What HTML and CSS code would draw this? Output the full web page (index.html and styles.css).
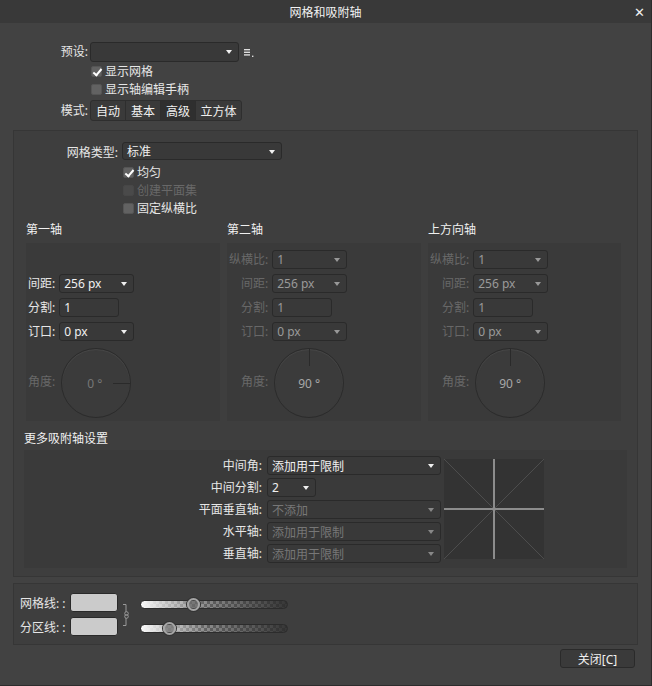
FILE: index.html
```html
<!DOCTYPE html>
<html lang="zh-CN">
<head>
    <meta charset="UTF-8">
    <title>网格和吸附轴</title>
    <link rel="stylesheet" href="styles.css">
</head>
<body>
<div class="dialog">
    <div class="titlebar">
        <span class="title">网格和吸附轴</span>
        <span class="close">&#x2715;</span>
    </div>

    <div class="top">
        <div class="lbl">预设:</div>
        <div class="row">
            <div class="select preset"><span></span><i class="arrow"></i></div>
            <svg class="menu-icon" width="10" height="10" viewBox="0 0 10 10">
                <rect x="0" y="1" width="6" height="1.4" fill="#ddd"/>
                <rect x="0" y="3.6" width="6" height="1.4" fill="#ddd"/>
                <rect x="0" y="6.2" width="6" height="1.4" fill="#ddd"/>
                <rect x="8" y="7.6" width="1.4" height="1.4" fill="#ddd"/>
            </svg>
        </div>
        <div></div>
        <label class="check"><span class="box on"></span>显示网格</label>
        <div></div>
        <label class="check"><span class="box"></span>显示轴编辑手柄</label>
        <div class="lbl">模式:</div>
        <div class="segmented">
            <span>自动</span><span>基本</span><span class="sel">高级</span><span>立方体</span>
        </div>
    </div>

    <div class="panel main">
        <div class="gridtype">
            <div class="lbl">网格类型:</div>
            <div class="select wide"><span>标准</span><i class="arrow"></i></div>
            <div></div>
            <label class="check"><span class="box on"></span>均匀</label>
            <div></div>
            <label class="check disabled"><span class="box"></span>创建平面集</label>
            <div></div>
            <label class="check"><span class="box"></span>固定纵横比</label>
        </div>

        <div class="axes">
            <div class="axis">
                <h3>第一轴</h3>
                <div class="axis-box">
                    <div class="spacer"></div>
                    <div class="lbl">间距:</div>
                    <div class="select w74"><span>256 px</span><i class="arrow"></i></div>
                    <div class="lbl">分割:</div>
                    <div class="input w60">1</div>
                    <div class="lbl">订口:</div>
                    <div class="select w74"><span>0 px</span><i class="arrow"></i></div>
                    <div class="lbl off">角度:</div>
                    <div class="dial deg0"><span>0 °</span></div>
                </div>
            </div>
            <div class="axis">
                <h3>第二轴</h3>
                <div class="axis-box dim">
                    <div class="lbl off">纵横比:</div>
                    <div class="select w74"><span>1</span><i class="arrow"></i></div>
                    <div class="lbl off">间距:</div>
                    <div class="select w74"><span>256 px</span><i class="arrow"></i></div>
                    <div class="lbl off">分割:</div>
                    <div class="input w60">1</div>
                    <div class="lbl off">订口:</div>
                    <div class="select w74"><span>0 px</span><i class="arrow"></i></div>
                    <div class="lbl off">角度:</div>
                    <div class="dial deg90"><span>90 °</span></div>
                </div>
            </div>
            <div class="axis">
                <h3>上方向轴</h3>
                <div class="axis-box dim">
                    <div class="lbl off">纵横比:</div>
                    <div class="select w74"><span>1</span><i class="arrow"></i></div>
                    <div class="lbl off">间距:</div>
                    <div class="select w74"><span>256 px</span><i class="arrow"></i></div>
                    <div class="lbl off">分割:</div>
                    <div class="input w60">1</div>
                    <div class="lbl off">订口:</div>
                    <div class="select w74"><span>0 px</span><i class="arrow"></i></div>
                    <div class="lbl off">角度:</div>
                    <div class="dial deg90"><span>90 °</span></div>
                </div>
            </div>
        </div>

        <h3 class="more-title">更多吸附轴设置</h3>
        <div class="more-box">
            <div class="lbl">中间角:</div>
            <div class="select w173"><span>添加用于限制</span><i class="arrow"></i></div>
            <div class="preview">
                <svg width="100" height="100" viewBox="0 0 100 100">
                    <rect width="100" height="100" fill="#333"/>
                    <line x1="0" y1="0" x2="100" y2="100" stroke="#4d4d4d" stroke-width="1"/>
                    <line x1="100" y1="0" x2="0" y2="100" stroke="#4d4d4d" stroke-width="1"/>
                    <line x1="50" y1="0" x2="50" y2="100" stroke="#8c8c8c" stroke-width="2"/>
                    <line x1="0" y1="50" x2="100" y2="50" stroke="#8c8c8c" stroke-width="2"/>
                </svg>
            </div>
            <div class="lbl">中间分割:</div>
            <div class="select w48"><span>2</span><i class="arrow"></i></div>
            <div class="lbl">平面垂直轴:</div>
            <div class="select w173 dim"><span>不添加</span><i class="arrow"></i></div>
            <div class="lbl">水平轴:</div>
            <div class="select w173 dim"><span>添加用于限制</span><i class="arrow"></i></div>
            <div class="lbl">垂直轴:</div>
            <div class="select w173 dim"><span>添加用于限制</span><i class="arrow"></i></div>
        </div>
    </div>

    <div class="panel lines">
        <div class="swatches">
            <div class="swatch-row">
                <span class="lbl-left">网格线: :</span>
                <span class="swatch"></span>
            </div>
            <div class="swatch-row">
                <span class="lbl-left">分区线: :</span>
                <span class="swatch"></span>
            </div>
            <svg class="link" width="8" height="24" viewBox="0 0 8 24">
                <path d="M1 1.5 H4 V9 M4 15 V22.5 H1" fill="none" stroke="#999" stroke-width="1"/>
                <circle cx="4.5" cy="10.5" r="1.8" fill="none" stroke="#999" stroke-width="1"/>
                <circle cx="4.5" cy="13.5" r="1.8" fill="none" stroke="#999" stroke-width="1"/>
            </svg>
        </div>
        <div class="sliders">
            <div class="slider"><span class="knob" style="left: 46px"></span></div>
            <div class="slider"><span class="knob" style="left: 22px"></span></div>
        </div>
    </div>

    <div class="footer">
        <button class="btn">关闭[C]</button>
    </div>
</div>
</body>
</html>
```

FILE: styles.css
```css
* {
    box-sizing: border-box;
}

body {
    margin: 0;
    background: #2b2b2b;
    font-family: "Noto Sans", "Noto Sans CJK SC", sans-serif;
    font-size: 12px;
    color: #e6e6e6;
}

.dialog {
    width: 652px;
    height: 686px;
    background: #424242;
    border-right: 1px solid #2c2c2c;
    border-bottom: 1px solid #2c2c2c;
}

.titlebar {
    height: 23px;
    background: #393939;
    position: relative;
    display: flex;
    align-items: center;
    justify-content: center;
}

.title {
    color: #f2f2f2;
}

.close {
    position: absolute;
    right: 6px;
    top: 3px;
    font-size: 13px;
    color: #f0f0f0;
}

.lbl {
    justify-self: end;
    align-self: center;
    white-space: nowrap;
    line-height: 16px;
}

.lbl.off,
.check.disabled {
    color: #686868;
}

/* top area */
.top {
    display: grid;
    grid-template-columns: 88px auto;
    column-gap: 2px;
    justify-content: start;
    margin-top: 18px;
}

.row {
    display: flex;
    align-items: center;
    height: 21px;
}

.menu-icon {
    margin-left: 5px;
    margin-top: 2px;
}

.check {
    display: flex;
    align-items: center;
    height: 18px;
    gap: 3px;
    white-space: nowrap;
}

.top .check {
    margin-left: 1px;
}

.box {
    width: 11px;
    height: 11px;
    border-radius: 2px;
    background: #626262;
    border: 1px solid #555;
    position: relative;
}

.box.on::after {
    content: "";
    position: absolute;
    left: 3px;
    top: 0;
    width: 3px;
    height: 7px;
    border-right: 2px solid #fff;
    border-bottom: 2px solid #fff;
    transform: rotate(40deg);
}

.check.disabled .box {
    background: #4a4a4a;
    border-color: #474747;
}

.top .check:nth-of-type(2) {
    margin-bottom: 2px;
}

.segmented {
    display: flex;
    height: 21px;
    width: 152px;
    border: 1px solid #2e2e2e;
    border-radius: 3px;
    background: #3a3a3a;
    overflow: hidden;
}

.segmented span {
    display: flex;
    align-items: center;
    justify-content: center;
    width: 35px;
    border-right: 1px solid #2e2e2e;
    color: #f0f0f0;
}

.segmented span:last-child {
    flex: 1;
    border-right: 0;
}

.segmented .sel {
    background: #2f2f2f;
}

/* fields */
.select,
.input {
    height: 19px;
    border: 1px solid #2a2a2a;
    border-radius: 3px;
    background: #393939;
    display: flex;
    align-items: center;
    padding-left: 4px;
    position: relative;
    color: #f0f0f0;
    white-space: nowrap;
}

.select.preset {
    width: 149px;
    height: 20px;
}

.arrow {
    position: absolute;
    right: 6px;
    top: 7px;
    width: 0;
    height: 0;
    border-left: 3.5px solid transparent;
    border-right: 3.5px solid transparent;
    border-top: 4px solid #f0f0f0;
}

.dim .select,
.dim .input,
.select.dim {
    color: #9a9a9a;
}

.dim .arrow,
.select.dim .arrow {
    border-top-color: #999;
}

.more-box .select.dim {
    color: #777;
}

.more-box .select.dim .arrow {
    border-top-color: #888;
}

.w74 {
    width: 75px;
}

.w60 {
    width: 60px;
}

.w48 {
    width: 49px;
}

.w173 {
    width: 174px;
}

.wide {
    width: 160px;
    height: 18px;
}

/* main panel */
.panel {
    margin: 0 13px;
    background: #3e3e3e;
    border: 1px solid #363636;
}

.main {
    margin-top: 9px;
    padding: 11px 0 8px 12px;
    height: 447px;
}

.gridtype {
    display: grid;
    grid-template-columns: 92px auto;
    column-gap: 4px;
    justify-content: start;
}

.gridtype .check {
    margin-left: 1px;
}

.gridtype .wide {
    margin-bottom: 3px;
}

.axes {
    display: grid;
    grid-template-columns: 194px 194px 193px;
    column-gap: 7px;
    margin-top: 3px;
}

h3 {
    margin: 0;
    font-size: 12px;
    font-weight: normal;
    color: #f0f0f0;
    height: 23px;
    line-height: 20px;
}

.axis-box {
    height: 178px;
    background: #3a3a3a;
    display: grid;
    grid-template-columns: auto auto;
    justify-content: start;
    column-gap: 4px;
    row-gap: 5px;
    padding: 7px 0 0 2px;
    align-content: start;
}

.spacer {
    grid-column: 1 / 3;
    height: 19px;
}

.dial {
    width: 70px;
    height: 70px;
    border-radius: 50%;
    border: 1px solid #2b2b2b;
    background: #3b3b3b;
    box-shadow: inset 0 1px 1px #484848;
    margin: 2px 0 0 2px;
    position: relative;
    display: flex;
    align-items: center;
    justify-content: center;
    color: #a8a8a8;
}

.deg0 span {
    color: #777;
    margin-left: -3px;
}

.deg0::after {
    content: "";
    position: absolute;
    right: 0;
    top: 34px;
    width: 17px;
    height: 1px;
    background: #2a2a2a;
}

.deg90::after {
    content: "";
    position: absolute;
    left: 34px;
    top: 0;
    width: 1px;
    height: 17px;
    background: #2a2a2a;
}

.more-title {
    margin-top: 8px;
    margin-left: -2px;
    height: 21px;
}

.more-box {
    margin-left: -2px;
    width: 603px;
    height: 118px;
    background: #3a3a3a;
    display: grid;
    grid-template-columns: 238px 174px 100px;
    grid-template-rows: repeat(5, 19px);
    column-gap: 5px;
    row-gap: 3px;
    padding-top: 6px;
    margin-top: 0;
}

.preview {
    grid-column: 3;
    grid-row: 1 / 6;
    align-self: start;
    margin-top: 3px;
    margin-left: -2px;
    height: 100px;
}

.preview svg {
    display: block;
}

/* bottom panel */
.lines {
    margin-top: 6px;
    height: 62px;
    display: flex;
    align-items: flex-start;
    padding: 9px 0 0 6px;
}

.swatches {
    position: relative;
    width: 120px;
}

.swatch-row {
    display: flex;
    align-items: center;
    height: 19px;
    margin-bottom: 5px;
}

.lbl-left {
    width: 50px;
    white-space: nowrap;
}

.swatch {
    width: 48px;
    height: 19px;
    border-radius: 3px;
    background: #cbcbcb;
    border: 1px solid #2a2a2a;
}

.link {
    position: absolute;
    left: 102px;
    top: 10px;
}

.sliders {
    padding-top: 7px;
}

.slider {
    position: relative;
    width: 148px;
    height: 9px;
    border-radius: 5px;
    border: 1px solid #2c2c2c;
    margin-bottom: 15px;
    background:
        linear-gradient(to right, #fafafa 0%, rgba(250, 250, 250, 0) 45%, rgba(40, 40, 40, 0.85) 100%),
        repeating-conic-gradient(#8a8a8a 0 25%, #606060 0 50%) 0 0 / 6px 6px;
}

.knob {
    position: absolute;
    top: -3px;
    width: 13px;
    height: 13px;
    border-radius: 50%;
    border: 2px solid #a5a5a5;
    background: rgba(90, 90, 90, 0.6);
    box-shadow: 0 0 0 1px #333;
}

.footer {
    display: flex;
    justify-content: flex-end;
    padding: 4px 16px 0 0;
}

.btn {
    width: 75px;
    height: 19px;
    background: #3a3a3a;
    border: 1px solid #2a2a2a;
    border-radius: 3px;
    color: #f0f0f0;
    font-family: inherit;
    font-size: 12px;
    padding: 0;
}
```
